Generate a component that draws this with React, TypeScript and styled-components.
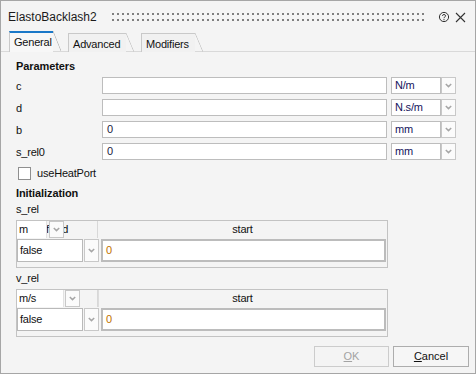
import React from "react";
import styled, { createGlobalStyle, css } from "styled-components";

const Global = createGlobalStyle`
  html, body { margin: 0; padding: 0; background: #f4f4f4; }
  body { font-family: "Liberation Sans", Arial, sans-serif; }
  * { box-sizing: border-box; }
`;

const Window = styled.div`
  width: 476px;
  height: 374px;
  border: 1px solid #a6a6a6;
  background: #f4f4f4;
  display: flex;
  flex-direction: column;
  font-size: 11px;
  color: #000;
`;

const TitleBar = styled.div`
  height: 30px;
  display: flex;
  align-items: center;
  padding: 2px 9px 0 7px;
`;

const Title = styled.div`
  font-size: 12px;
  color: #1b1b1b;
  line-height: 14px;
`;

const Grip = styled.div`
  flex: 1;
  height: 8px;
  margin: 0 8px 0 15px;
  background-image: linear-gradient(#8a8a8a, #8a8a8a);
  background-image: radial-gradient(circle at 1px 1px, #7f7f7f 1px, transparent 1.2px);
  background-size: 5px 6px;
  background-position: 0 0;
`;

const IconBox = styled.div`
  width: 12px;
  height: 12px;
  display: flex;
  align-items: center;
  justify-content: center;
  margin-left: 4px;
`;

const TabBar = styled.div`
  height: 21px;
  display: flex;
  align-items: flex-end;
  padding-left: 8px;
  gap: 15px;
  border-bottom: 1px solid #d9d9d9;
`;

const Tab = styled.div<{ $active?: boolean; $w: number }>`
  position: relative;
  width: ${(p) => p.$w}px;
  height: ${(p) => (p.$active ? 21 : 19)}px;
  margin-bottom: -1px;
  border-left: 1px solid #c9c9c9;
  border-top: ${(p) => (p.$active ? "2px solid #1a78c8" : "1px solid #c9c9c9")};
  background: ${(p) => (p.$active ? "#f7f7f7" : "#f1f1f1")};
  padding: ${(p) => (p.$active ? "3px 0 0 4px" : "4px 0 0 4px")};
  line-height: 13px;
  font-size: 11px;
  letter-spacing: -0.2px;
  color: #111;
  &::after {
    content: "";
    position: absolute;
    top: ${(p) => (p.$active ? -2 : -1)}px;
    right: -8px;
    width: 8px;
    bottom: ${(p) => (p.$active ? 1 : 0)}px;
    background: linear-gradient(
      to top right,
      transparent calc(50% - 0.7px),
      ${(p) => (p.$active ? "#bcbcbc" : "#c9c9c9")} 50%,
      transparent calc(50% + 0.7px)
    );
  }
`;

const Panel = styled.div`
  flex: 1;
  display: flex;
  flex-direction: column;
  padding: 6px 0 0 15px;
`;

const Heading = styled.div<{ $top?: number }>`
  font-weight: bold;
  font-size: 11px;
  line-height: 16px;
  letter-spacing: -0.1px;
  margin-top: ${(p) => p.$top ?? 0}px;
  color: #111;
`;

const Label = styled.div<{ $top?: number }>`
  line-height: 16px;
  margin-top: ${(p) => p.$top ?? 0}px;
  color: #111;
  letter-spacing: -0.2px;
`;

const ParamRow = styled.div<{ $top: number }>`
  display: grid;
  grid-template-columns: 86px 285px 54px 15px;
  height: 17px;
  margin-top: ${(p) => p.$top}px;
  align-items: center;
`;

const TextField = styled.div`
  height: 17px;
  background: #fff;
  border: 1px solid #bdbdbd;
  padding: 0 0 0 4px;
  line-height: 15px;
  color: #1a1a40;
`;

const UnitField = styled(TextField)`
  margin-left: 4px;
  padding-left: 3px;
  color: #14145c;
  letter-spacing: -0.2px;
`;

const DropButton = styled.div<{ $w?: number; $h?: number }>`
  width: ${(p) => p.$w ?? 15}px;
  height: ${(p) => p.$h ?? 17}px;
  background: #fbfbfb;
  border: 1px solid #c8c8c8;
  display: flex;
  align-items: center;
  justify-content: center;
  flex: none;
`;

const CheckRow = styled.div`
  display: flex;
  align-items: center;
  height: 16px;
  margin-top: 5px;
  padding-left: 2px;
  gap: 6px;
`;

const CheckText = styled.span`
  letter-spacing: -0.2px;
  color: #111;
`;

const CheckBox = styled.div`
  width: 13px;
  height: 13px;
  background: #fff;
  border: 1px solid #8f8f8f;
`;

const Table = styled.div`
  width: 372px;
  height: 48px;
  margin-top: 3px;
  border: 1px solid #c3c3c3;
  background: #f4f4f4;
  display: flex;
  flex-direction: column;
`;

const HeaderRow = styled.div`
  height: 17px;
  display: grid;
  grid-template-columns: 81px 1fr;
`;

const HeaderCell = styled.div<{ $sep?: boolean }>`
  position: relative;
  height: 17px;
  line-height: 16px;
  text-align: center;
  color: #111;
  letter-spacing: -0.2px;
  ${(p) =>
    p.$sep &&
    css`
      border-right: 1px solid #d8d8d8;
    `}
`;

const HeaderEditor = styled.div`
  position: absolute;
  left: 0;
  top: 0;
  height: 17px;
  display: flex;
  align-items: stretch;
`;

const EditorText = styled.div<{ $w: number; $gap: number }>`
  width: ${(p) => p.$w}px;
  margin-right: ${(p) => p.$gap}px;
  background: #fff;
  text-align: left;
  padding-left: 2px;
  line-height: 17px;
  color: #111;
  border-right: 1px solid #e2e2e2;
`;

const HeaderSep = styled.div<{ $w: number }>`
  width: ${(p) => p.$w}px;
  border-right: 1px solid #dcdcdc;
`;

const DataRow = styled.div`
  height: 25px;
  display: flex;
  padding: 1px 1px 1px 0;
  gap: 1px;
`;

const CellCombo = styled.div`
  width: 66px;
  height: 23px;
  background: #fff;
  border: 1px solid #b9b9b9;
  padding-left: 2px;
  line-height: 21px;
  color: #111;
  letter-spacing: -0.2px;
`;

const CellInput = styled.div`
  flex: 1;
  height: 23px;
  margin-left: 1px;
  background: #fff;
  border: 2px solid #bcbcbc;
  padding-left: 3px;
  line-height: 19px;
  color: #c07000;
`;

const Footer = styled.div`
  display: flex;
  justify-content: flex-end;
  gap: 4px;
  padding: 0 6px 6px 0;
`;

const Button = styled.div<{ $disabled?: boolean; $w: number }>`
  width: ${(p) => p.$w}px;
  height: 21px;
  border: 1px solid ${(p) => (p.$disabled ? "#cccccc" : "#adadad")};
  background: ${(p) => (p.$disabled ? "#f4f4f4" : "#f6f6f6")};
  color: ${(p) => (p.$disabled ? "#a3a3a3" : "#111")};
  text-align: center;
  line-height: 19px;
  font-size: 11px;
  u { text-decoration: underline; text-underline-offset: 1px; }
`;

const Chevron = () => (
  <svg width="7" height="5" viewBox="0 0 7 5">
    <polyline points="0.8,1 3.5,3.6 6.2,1" fill="none" stroke="#a6a6a6" strokeWidth="1.5" />
  </svg>
);

const HelpIcon = () => (
  <svg width="12" height="12" viewBox="0 0 12 12">
    <circle cx="6" cy="6" r="4.6" fill="none" stroke="#333" strokeWidth="1" />
    <path d="M4.4 4.8 C4.4 3.1 7.6 3.1 7.6 4.8 C7.6 6 6 5.8 6 7.2" fill="none" stroke="#333" strokeWidth="1" />
    <circle cx="6" cy="8.7" r="0.6" fill="#333" />
  </svg>
);

const CloseIcon = () => (
  <svg width="11" height="11" viewBox="0 0 11 11">
    <path d="M1 1 L10 10 M10 1 L1 10" stroke="#333" strokeWidth="1.1" />
  </svg>
);

const params = [
  { label: "c", value: "", unit: "N/m", top: 3 },
  { label: "d", value: "", unit: "N.s/m", top: 5 },
  { label: "b", value: "0", unit: "mm", top: 5 },
  { label: "s_rel0", value: "0", unit: "mm", top: 5 },
];

type InitTableProps = {
  unit: string;
  textW: number;
  textGap: number;
  btnW: number;
  sepW?: number;
  headerText: string;
};

const InitTable = ({ unit, textW, textGap, btnW, sepW, headerText }: InitTableProps) => (
  <Table>
    <HeaderRow>
      <HeaderCell $sep>
        {headerText}
        <HeaderEditor>
          <EditorText $w={textW} $gap={textGap}>
            {unit}
          </EditorText>
          <DropButton $w={btnW}>
            <Chevron />
          </DropButton>
          {sepW ? <HeaderSep $w={sepW} /> : null}
        </HeaderEditor>
      </HeaderCell>
      <HeaderCell>start</HeaderCell>
    </HeaderRow>
    <DataRow>
      <CellCombo>false</CellCombo>
      <DropButton $w={15} $h={23}>
        <Chevron />
      </DropButton>
      <CellInput>0</CellInput>
    </DataRow>
  </Table>
);

export default function App() {
  return (
    <>
      <Global />
      <Window>
        <TitleBar>
          <Title>ElastoBacklash2</Title>
          <Grip />
          <IconBox>
            <HelpIcon />
          </IconBox>
          <IconBox>
            <CloseIcon />
          </IconBox>
        </TitleBar>
        <TabBar>
          <Tab $active $w={44}>General</Tab>
          <Tab $w={58}>Advanced</Tab>
          <Tab $w={54}>Modifiers</Tab>
        </TabBar>
        <Panel>
          <Heading>Parameters</Heading>
          {params.map((p) => (
            <ParamRow key={p.label} $top={p.top}>
              <Label>{p.label}</Label>
              <TextField>{p.value}</TextField>
              <UnitField>{p.unit}</UnitField>
              <DropButton>
                <Chevron />
              </DropButton>
            </ParamRow>
          ))}
          <CheckRow>
            <CheckBox />
            <CheckText>useHeatPort</CheckText>
          </CheckRow>
          <Heading $top={4}>Initialization</Heading>
          <Label>s_rel</Label>
          <InitTable unit="m" textW={30} textGap={2} btnW={15} headerText="fixed" />
          <Label $top={2}>v_rel</Label>
          <InitTable unit="m/s" textW={47} textGap={1} btnW={15} sepW={19} headerText="" />
        </Panel>
        <Footer>
          <Button $disabled $w={75}>
            <u>O</u>K
          </Button>
          <Button $w={76}>
            <u>C</u>ancel
          </Button>
        </Footer>
      </Window>
    </>
  );
}
